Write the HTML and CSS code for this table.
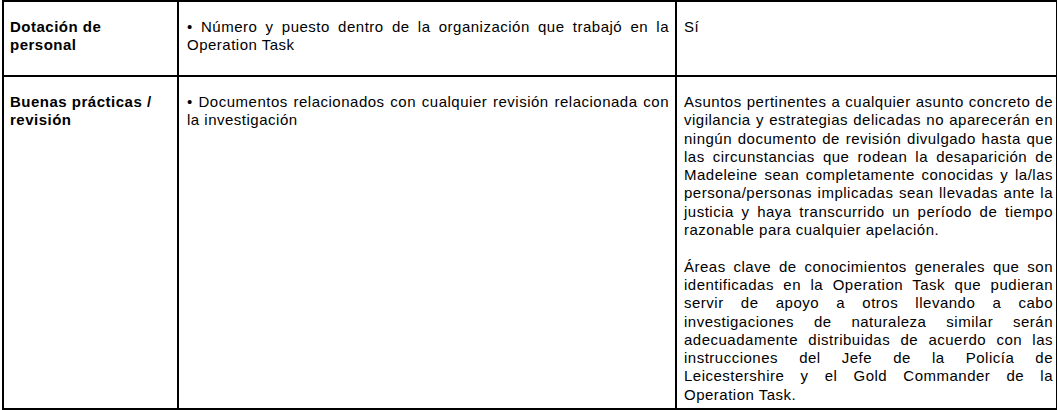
FILE: index.html
```html
<!DOCTYPE html>
<html lang="es">
<head>
<meta charset="utf-8">
<title>Tabla</title>
<link rel="stylesheet" href="styles.css">
</head>
<body>
<div class="sheet">
  <div class="cell label row1">Dotación de personal</div>
  <div class="cell mid row1">• Número y puesto dentro de la organización que trabajó en la Operation Task</div>
  <div class="cell last row1">Sí</div>
  <div class="cell label row2">Buenas prácticas / revisión</div>
  <div class="cell mid row2">• Documentos relacionados con cualquier revisión relacionada con la investigación</div>
  <div class="cell last row2">
    <p class="para">Asuntos pertinentes a cualquier asunto concreto de vigilancia y estrategias delicadas no aparecerán en ningún documento de revisión divulgado hasta que las circunstancias que rodean la desaparición de Madeleine sean completamente conocidas y la/las persona/personas implicadas sean llevadas ante la justicia y haya transcurrido un período de tiempo razonable para cualquier apelación.</p>
    <p class="para">Áreas clave de conocimientos generales que son identificadas en la Operation Task que pudieran servir de apoyo a otros llevando a cabo investigaciones de naturaleza similar serán adecuadamente distribuidas de acuerdo con las instrucciones del Jefe de la Policía de Leicestershire y el Gold Commander de la Operation Task.</p>
  </div>
</div>
</body>
</html>
```
FILE: styles.css
```css
html, body {
  margin: 0;
  padding: 0;
  background: #ffffff;
}
body {
  width: 1059px;
  height: 410px;
  overflow: hidden;
  font-family: "Liberation Sans", Arial, sans-serif;
  font-size: 15px;
  line-height: 18.3px;
  letter-spacing: 0.5px;
  color: #000000;
}
.sheet {
  margin-left: 2px;
  width: 1055px;
  box-sizing: border-box;
  display: grid;
  grid-template-columns: 175px 498px 379px;
  grid-template-rows: 75px 331px;
  border-top: 2px solid #000;
  border-left: 2px solid #000;
  border-right: 1px solid #000;
  border-bottom: 2px solid #000;
  height: 410px;
}
.cell {
  box-sizing: border-box;
  overflow: hidden;
  padding-top: 16px;
}
.row1 {
  border-bottom: 2px solid #000;
}
.label {
  font-weight: bold;
  padding-left: 6px;
  padding-right: 10px;
  border-right: 2px solid #000;
}
.mid {
  padding-left: 8px;
  padding-right: 6px;
  text-align: justify;
  border-right: 2px solid #000;
}
.last {
  padding-left: 7px;
  padding-right: 3px;
  text-align: justify;
}
.para {
  margin: 0 0 18.3px 0;
}
```
